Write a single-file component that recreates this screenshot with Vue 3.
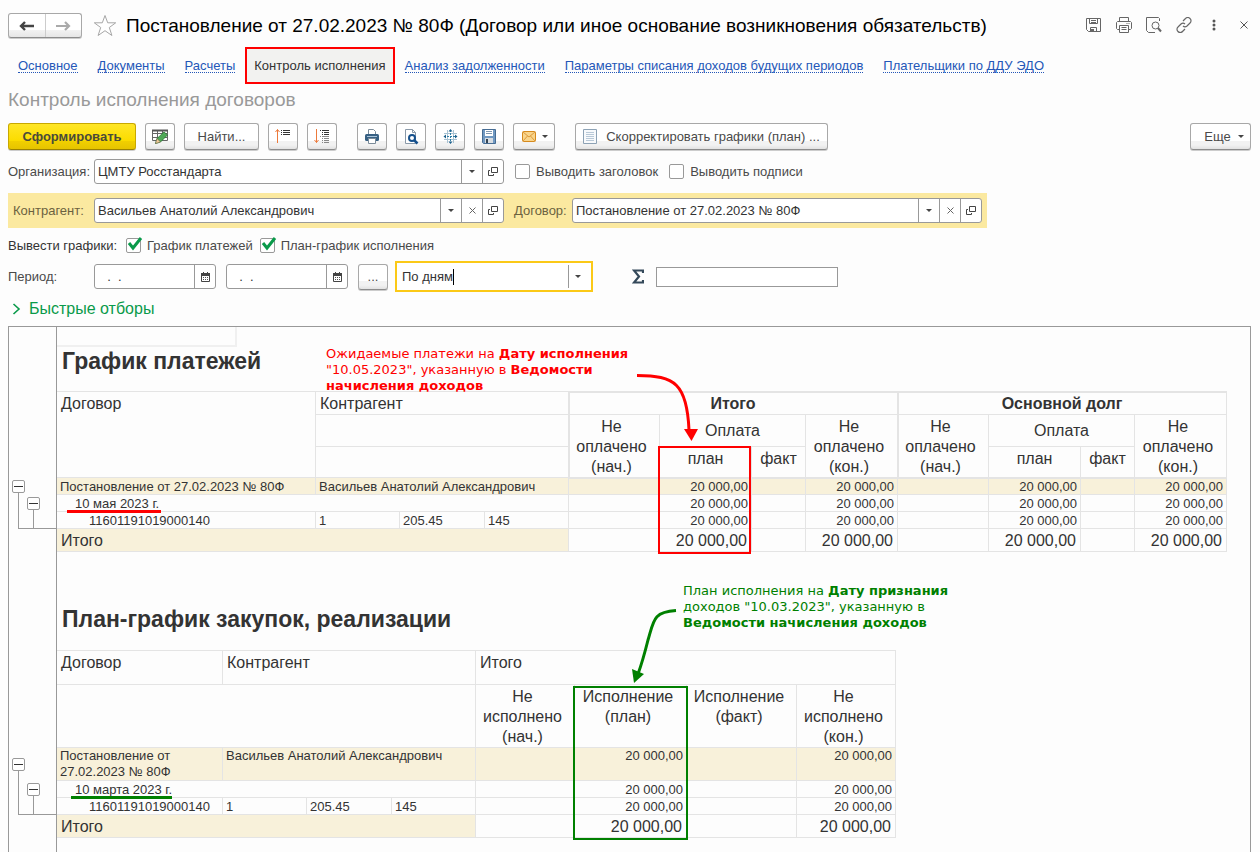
<script setup>
import { ref } from 'vue'

const links = [
  { text: 'Основное' },
  { text: 'Документы' },
  { text: 'Расчеты' },
  { text: 'Контроль исполнения', active: true },
  { text: 'Анализ задолженности' },
  { text: 'Параметры списания доходов будущих периодов' },
  { text: 'Плательщики по ДДУ ЭДО' },
]

const organization = ref('ЦМТУ Росстандарта')
const contractor = ref('Васильев Анатолий Александрович')
const contract = ref('Постановление от 27.02.2023 № 80Ф')
const periodicity = ref('По дням')
const dateFrom = ref('  .  .')
const dateTo = ref('  .  .')
const total = ref('')
const showTitle = ref(false)
const showSigns = ref(false)
const showPayments = ref(true)
const showPlan = ref(true)

const sum = '20 000,00'
const payments = ['', sum, '', sum, '', sum, '', sum]
const execution = ['', sum, '', sum]
</script>

<template>
  <main class="window">
    <header class="titlebar">
      <div class="history">
        <button type="button" aria-label="Назад">
          <svg width="16" height="10" viewBox="0 0 16 10"><path d="M6 1 2 5l4 4M2 5h13" fill="none" stroke="#444" stroke-width="2.400" /></svg>
        </button>
        <button type="button" aria-label="Вперед">
          <svg width="16" height="10" viewBox="0 0 16 10"><path d="m10 1 4 4-4 4M14 5H1" fill="none" stroke="#aaa" stroke-width="2.200" /></svg>
        </button>
      </div>
      <button class="plain star" type="button" aria-label="В избранное">
        <svg width="24" height="23" viewBox="0 0 24 23"><path d="m12 1.500 2.700 7.300h8L16.300 13.500l2.600 8L12 16.700l-6.900 4.800 2.600-8L1.300 8.800h8z" fill="#fff" stroke="#a6a6a6" /></svg>
      </button>
      <h1>Постановление от 27.02.2023 № 80Ф (Договор или иное основание возникновения обязательств)</h1>
      <div class="tools">
        <button class="plain" type="button" aria-label="Сохранить">
          <svg width="16" height="16" viewBox="0 0 16 16" fill="none" stroke="#666"><path d="M.5 1.500h14v13h-12l-2-2zM3.500 1.500v5h8v-5M5 3.500h5M5 5.500h5M4.500 14v-3.500h6V14" /><path d="M5 12h3v2H5z" fill="#666" stroke="none" /></svg>
        </button>
        <button class="plain" type="button" aria-label="Печать">
          <svg width="16" height="16" viewBox="0 0 16 16" fill="none" stroke="#666"><path d="M3.500 4.500v-4h9v4M3.500 12.500h-2l-1-1v-6l1-1h13l1 1v6l-1 1h-2M3.500 8.500h9v7h-9zM5.500 10.500h5M5.500 12.500h5M10.500 6.500h1M12.500 6.500h1" /></svg>
        </button>
        <button class="plain" type="button" aria-label="Просмотр">
          <svg width="16" height="16" viewBox="0 0 16 16" fill="none" stroke="#666"><path d="M9 15.500H2.500l-2-2V.5h12l1 1V4" /><circle cx="9.500" cy="8.500" r="3.500" /><path d="m12 11 3 3.500" stroke-width="2" /></svg>
        </button>
        <button class="plain" type="button" aria-label="Получить ссылку">
          <svg width="16" height="16" viewBox="0 0 16 16" fill="none" stroke="#666" stroke-width="1.200"><path d="m7 4 2.500-2.500a3 3 0 0 1 4.500 0 3 3 0 0 1 0 4.500L11 9a3 3 0 0 1-4 0M9 12l-2.500 2.500a3 3 0 0 1-4.500 0 3 3 0 0 1 0-4.500L5 7a3 3 0 0 1 4 0" /></svg>
        </button>
        <button class="plain" type="button" aria-label="Меню">
          <svg width="4" height="12" viewBox="0 0 4 12" fill="#555"><circle cx="2" cy="2" r="1.500" /><circle cx="2" cy="6" r="1.500" /><circle cx="2" cy="10" r="1.500" /></svg>
        </button>
        <button class="plain" type="button" aria-label="Закрыть">
          <svg width="8" height="8" viewBox="0 0 8 8"><path d="m.5.5 7 7M7.500.5l-7 7" stroke="#555" /></svg>
        </button>
      </div>
    </header>

    <nav class="links" aria-label="Разделы">
      <a v-for="l in links" :key="l.text" href="#" :class="{ active: l.active }"><span>{{ l.text }}</span></a>
    </nav>

    <div class="form">
      <h2>Контроль исполнения договоров</h2>

      <div class="toolbar">
        <button class="btn primary" type="button">Сформировать</button>
        <button class="btn icon" type="button" aria-label="Изменить вариант">
          <svg width="16" height="17" viewBox="0 0 16 17"><path d="M.5 2.500h15v10H.5zM.5 5.500h15M.5 9.500h15M5.500 2.500v10M10.500 2.500v10" fill="#fff" stroke="#666" /><path d="M0 2.500h16" stroke="#555" stroke-width="2" /><path d="m3.500 15.500 1.500-5 7-6.500 3.500 3-7 7z" fill="#4fa857" stroke="#2a7a34" stroke-width=".8" /><path d="m3.500 15.500 1.500-5 3.500 3.500z" fill="#f0c99a" stroke="#6b5a40" stroke-width=".5" /></svg>
        </button>
        <button class="btn find" type="button">Найти...</button>
        <button class="btn icon" type="button" aria-label="Свернуть группы">
          <svg width="16" height="17" viewBox="0 0 16 17"><path d="M2.500 15V1.500M.5 4l2-2.500 2 2.500" fill="none" stroke="#ec7a3c" /><path d="M6 2.500h1M8 2.500h7M6 4.500h1M8 4.500h7M6 6.500h1M8 6.500h7" stroke="#333" /></svg>
        </button>
        <button class="btn icon" type="button" aria-label="Развернуть группы">
          <svg width="16" height="17" viewBox="0 0 16 17"><path d="M2.500 1v13.500M.5 12l2 2.500 2-2.500" fill="none" stroke="#ec7a3c" /><path d="M6 2.500h1M8 2.500h7M8 4.500h1M10 4.500h5M8 6.500h1M10 6.500h5" stroke="#333" /><path d="M6 8.500h1M8 8.500h7M8 10.500h1M10 10.500h5M8 12.500h1M10 12.500h5M8 14.500h1M10 14.500h5" stroke="#888" /></svg>
        </button>
        <span class="gap"></span>
        <button class="btn icon" type="button" aria-label="Печать">
          <svg width="16" height="17" viewBox="0 0 16 17"><path d="M4.500 6.500v-5h5l2 2v3" fill="#fff" stroke="#7a8b99" /><rect x="1" y="6" width="14" height="7" rx="1.500" fill="#376083" /><path d="M3 8.500h10" stroke="#a9c4da" /><path d="M4.500 10.500h7v5h-7z" fill="#fff" stroke="#7a8b99" /></svg>
        </button>
        <button class="btn icon" type="button" aria-label="Предварительный просмотр">
          <svg width="16" height="17" viewBox="0 0 16 17"><path d="M2.500 1.500h7l3 3v11h-10z" fill="#fff" stroke="#8a99a8" /><path d="M9.500 1.500v3h3" fill="none" stroke="#8a99a8" /><circle cx="9" cy="10" r="3" fill="#fff" stroke="#15508c" stroke-width="2" /><path d="m11 12 3.500 3.500" stroke="#15508c" stroke-width="2.500" /></svg>
        </button>
        <button class="btn icon" type="button" aria-label="Параметры страницы">
          <svg width="15" height="17" viewBox="0 0 15 17"><path d="M4.500 2v13M10.500 2v13M1 5.500h13M1 11.500h13" stroke="#a9c3d3" /><path d="M7.500 2v13M1 8.500h13" stroke="#2c7da5" stroke-dasharray="2 1" /><path d="M5.500 3.500l2-2.500 2 2.500zM5.500 13.500l2 2.500 2-2.500zM3 6.500l-2.500 2 2.500 2zM12 6.500l2.500 2-2.500 2z" fill="#1d618c" /></svg>
        </button>
        <button class="btn icon" type="button" aria-label="Сохранить отчет">
          <svg width="16" height="17" viewBox="0 0 16 17"><path d="M1.500 1.500h13v14h-12l-1-1z" fill="#7199c2" stroke="#466c93" /><path d="M4 2h8v6H4z" fill="#fff" /><path d="M5 3.500h6M5 5.500h6" stroke="#7f98b2" /><path d="M4 10h8v5H4z" fill="#d8dde2" /><path d="M5 11h2v4H5z" fill="#345" /></svg>
        </button>
        <button class="btn mail" type="button" aria-label="Отправить">
          <svg width="14" height="11" viewBox="0 0 14 11"><rect x=".5" y=".5" width="13" height="10" rx="1" fill="#f9d58c" stroke="#d68a1e" /><path d="m1 1 6 5 6-5M1 10l4.500-5M13 10 8.500 5" fill="none" stroke="#dd9a3a" /></svg>
          <i class="arrow"></i>
        </button>
        <span class="gap"></span>
        <button class="btn adjust" type="button">
          <svg width="14" height="15" viewBox="0 0 14 15"><path d="M.5.5h13v14H.5z" fill="#f8fafc" stroke="#8da2b5" /><path d="M3 3.500h8M3 5.500h8M3 7.500h8M3 9.500h8M3 11.500h8" stroke="#b9c9d8" /></svg>
          <span>Скорректировать графики (план) ...</span>
        </button>
        <button class="btn more" type="button">Еще<i class="arrow"></i></button>
      </div>

      <div class="row org">
        <label class="caption" for="org">Организация:</label>
        <div class="field">
          <input id="org" v-model="organization" type="text" />
          <button type="button" aria-label="Выбрать"><i class="arrow"></i></button>
          <button type="button" aria-label="Открыть">
            <svg width="10" height="9" viewBox="0 0 10 9" fill="none" stroke="#444"><path d="M3.500.5h6v5h-6z" /><path d="M2 3.500H.5v5h5V7" /></svg>
          </button>
        </div>
        <label class="check first"><span class="box"><input v-model="showTitle" type="checkbox" /></span>Выводить заголовок</label>
        <label class="check"><span class="box"><input v-model="showSigns" type="checkbox" /></span>Выводить подписи</label>
      </div>

      <div class="row band">
        <label class="caption" for="contractor">Контрагент:</label>
        <div class="field">
          <input id="contractor" v-model="contractor" type="text" />
          <button type="button" aria-label="Выбрать"><i class="arrow"></i></button>
          <button type="button" aria-label="Очистить">
            <svg width="7" height="7" viewBox="0 0 7 7"><path d="m.5.5 6 6M6.500.5l-6 6" stroke="#666" /></svg>
          </button>
          <button type="button" aria-label="Открыть">
            <svg width="10" height="9" viewBox="0 0 10 9" fill="none" stroke="#444"><path d="M3.500.5h6v5h-6z" /><path d="M2 3.500H.5v5h5V7" /></svg>
          </button>
        </div>
        <label class="caption second" for="contract">Договор:</label>
        <div class="field">
          <input id="contract" v-model="contract" type="text" />
          <button type="button" aria-label="Выбрать"><i class="arrow"></i></button>
          <button type="button" aria-label="Очистить">
            <svg width="7" height="7" viewBox="0 0 7 7"><path d="m.5.5 6 6M6.500.5l-6 6" stroke="#666" /></svg>
          </button>
          <button type="button" aria-label="Открыть">
            <svg width="10" height="9" viewBox="0 0 10 9" fill="none" stroke="#444"><path d="M3.500.5h6v5h-6z" /><path d="M2 3.500H.5v5h5V7" /></svg>
          </button>
        </div>
      </div>

      <div class="row charts">
        <span class="caption wide">Вывести графики:</span>
        <label class="check">
          <span class="box"><input v-model="showPayments" type="checkbox" /><svg v-if="showPayments" width="16" height="14" viewBox="0 0 16 14"><path d="m2 6 4 5 8-10" fill="none" stroke="#0a9a4a" stroke-width="3" /></svg></span>График платежей
        </label>
        <label class="check">
          <span class="box"><input v-model="showPlan" type="checkbox" /><svg v-if="showPlan" width="16" height="14" viewBox="0 0 16 14"><path d="m2 6 4 5 8-10" fill="none" stroke="#0a9a4a" stroke-width="3" /></svg></span>План-график исполнения
        </label>
      </div>

      <div class="row period">
        <label class="caption" for="from">Период:</label>
        <div class="field date">
          <input id="from" v-model="dateFrom" type="text" />
          <button type="button" aria-label="Календарь">
            <svg width="9" height="10" viewBox="0 0 9 10"><path d="M.5 1.500h8v8h-8z" fill="#fff" stroke="#444" /><path d="M0 1h9v3H0z" fill="#444" /><path d="M2.500 0v2M6.500 0v2" stroke="#444" /><path d="M2 5.500h5M2 7.500h5" stroke="#555" stroke-dasharray="1 1" /></svg>
          </button>
        </div>
        <div class="field date">
          <input v-model="dateTo" type="text" aria-label="Конец периода" />
          <button type="button" aria-label="Календарь">
            <svg width="9" height="10" viewBox="0 0 9 10"><path d="M.5 1.500h8v8h-8z" fill="#fff" stroke="#444" /><path d="M0 1h9v3H0z" fill="#444" /><path d="M2.500 0v2M6.500 0v2" stroke="#444" /><path d="M2 5.500h5M2 7.500h5" stroke="#555" stroke-dasharray="1 1" /></svg>
          </button>
        </div>
        <button class="btn dots" type="button" aria-label="Выбрать период">...</button>
        <div class="focused">
          <input v-model="periodicity" type="text" aria-label="Периодичность" />
          <span class="caret"></span>
          <button type="button" aria-label="Выбрать"><i class="arrow"></i></button>
        </div>
        <label class="sigma" for="sum" aria-label="Сумма">
          <svg width="12" height="15" viewBox="0 0 12 15"><path d="M11 4V1.500H2l5 6-5 6h9V11" fill="none" stroke="#34495a" stroke-width="2.200" /></svg>
        </label>
        <input id="sum" v-model="total" class="total" type="text" />
      </div>

      <button class="quick" type="button">
        <svg width="9" height="12" viewBox="0 0 9 12"><path d="m1.500 1 5.500 5-5.500 5" fill="none" stroke="#0a9a4a" stroke-width="1.600" /></svg>
        Быстрые отборы
      </button>

      <div class="report">
        <section class="part">
          <div class="gutter">
            <div class="tree">
              <i class="trunk"></i><i class="twig"></i>
              <button class="t1" type="button" aria-label="Свернуть договор"></button>
              <button class="t2" type="button" aria-label="Свернуть дату"></button>
            </div>
          </div>
          <div class="sheet">
            <div class="cursor"></div>
            <h3>График платежей</h3>
            <table class="payments">
              <colgroup>
                <col class="w259" /><col class="w84" /><col class="w85" /><col class="w84" />
                <col class="w91" /><col class="w92" /><col class="w54" /><col class="w92" />
                <col class="w91" /><col class="w92" /><col class="w54" /><col class="w92" />
              </colgroup>
              <thead>
                <tr class="h24">
                  <th class="left" rowspan="3">Договор</th>
                  <th class="left" colspan="3">Контрагент</th>
                  <th class="group" colspan="4">Итого</th>
                  <th class="group" colspan="4">Основной долг</th>
                </tr>
                <tr class="h32">
                  <th colspan="3"></th>
                  <template v-for="g in 2" :key="g">
                    <th class="wrap edge" rowspan="2">Не<br />оплачено<br />(нач.)</th>
                    <th class="pay" colspan="2">Оплата</th>
                    <th class="wrap" rowspan="2">Не<br />оплачено<br />(кон.)</th>
                  </template>
                </tr>
                <tr class="h31">
                  <th colspan="3"></th>
                  <template v-for="g in 2" :key="g">
                    <th>план</th>
                    <th>факт</th>
                  </template>
                </tr>
              </thead>
              <tbody>
                <tr class="h17 tint first-row">
                  <td>Постановление от 27.02.2023 № 80Ф</td>
                  <td colspan="3">Васильев Анатолий Александрович</td>
                  <td v-for="(v, i) in payments" :key="i" class="num">{{ v }}</td>
                </tr>
                <tr class="h17">
                  <td class="in1" colspan="4"><span class="mark red">10 мая 2023 г.</span></td>
                  <td v-for="(v, i) in payments" :key="i" class="num">{{ v }}</td>
                </tr>
                <tr class="h17">
                  <td class="in2">11601191019000140</td><td>1</td><td>205.45</td><td>145</td>
                  <td v-for="(v, i) in payments" :key="i" class="num">{{ v }}</td>
                </tr>
                <tr class="h23 sum">
                  <td class="tinted" colspan="4">Итого</td>
                  <td v-for="(v, i) in payments" :key="i" class="num">{{ v }}</td>
                </tr>
              </tbody>
            </table>
            <div class="frame red-frame"></div>
            <p class="note red-note">Ожидаемые платежи на <b>Дату исполнения</b><br />"10.05.2023", указанную в <b>Ведомости<br />начисления доходов</b></p>
            <svg class="red-arrow" width="64" height="70" viewBox="0 0 64 70"><path d="M0 3.500C38 3.500 50 12 52 58" fill="none" stroke="#f00" stroke-width="3" /><path d="M47 57h14L54.500 69z" fill="#f00" /></svg>
          </div>
        </section>

        <section class="part">
          <div class="gutter">
            <div class="tree tall">
              <i class="trunk"></i><i class="twig"></i>
              <button class="t1" type="button" aria-label="Свернуть договор"></button>
              <button class="t2" type="button" aria-label="Свернуть дату"></button>
            </div>
          </div>
          <div class="sheet">
            <h3 class="plan-title">План-график закупок, реализации</h3>
            <table class="plan">
              <colgroup>
                <col class="w166" /><col class="w84" /><col class="w85" /><col class="w84" />
                <col class="w99" /><col class="w112" /><col class="w110" /><col class="w99" />
              </colgroup>
              <thead>
                <tr class="h35">
                  <th class="left">Договор</th>
                  <th class="left" colspan="3">Контрагент</th>
                  <th class="left" colspan="4">Итого</th>
                </tr>
                <tr class="h63">
                  <th colspan="4"></th>
                  <th class="wrap">Не<br />исполнено<br />(нач.)</th>
                  <th class="wrap">Исполнение<br />(план)</th>
                  <th class="wrap">Исполнение<br />(факт)</th>
                  <th class="wrap">Не<br />исполнено<br />(кон.)</th>
                </tr>
              </thead>
              <tbody>
                <tr class="h33 tint">
                  <td>Постановление от<br />27.02.2023 № 80Ф</td>
                  <td colspan="3">Васильев Анатолий Александрович</td>
                  <td v-for="(v, i) in execution" :key="i" class="num">{{ v }}</td>
                </tr>
                <tr class="h17">
                  <td class="in1" colspan="4"><span class="mark green">10 марта 2023 г.</span></td>
                  <td v-for="(v, i) in execution" :key="i" class="num">{{ v }}</td>
                </tr>
                <tr class="h17">
                  <td class="in2">11601191019000140</td><td>1</td><td>205.45</td><td>145</td>
                  <td v-for="(v, i) in execution" :key="i" class="num">{{ v }}</td>
                </tr>
                <tr class="h23 sum">
                  <td class="tinted" colspan="4">Итого</td>
                  <td v-for="(v, i) in execution" :key="i" class="num">{{ v }}</td>
                </tr>
              </tbody>
            </table>
            <div class="frame green-frame"></div>
            <p class="note green-note">План исполнения на <b>Дату признания</b><br />доходов "10.03.2023", указанную в<br /><b>Ведомости начисления доходов</b></p>
            <svg class="green-arrow" width="46" height="76" viewBox="0 0 46 76"><path d="M45 2.500C22 4 23 12 17 32C13 48 11 55 7 66" fill="none" stroke="#008000" stroke-width="3" /><path d="M1 61 13 66 3 75z" fill="#008000" /></svg>
          </div>
        </section>
        <div class="part rest"><div class="gutter"></div></div>
      </div>
    </div>
  </main>
</template>

<style>
html, body { background: #fdfdfd; }
</style>

<style scoped>
* { box-sizing: border-box; }
.window {
  display: flex;
  flex-direction: column;
  min-height: 100vh;
  font: 13px/16px "Liberation Sans", Arial, sans-serif;
  color: #4a4a4a;
}
button, input { font: inherit; color: inherit; margin: 0; padding: 0; }
button { display: flex; align-items: center; justify-content: center; cursor: pointer; }
svg { display: block; flex: none; }
h1, h2, h3, p { margin: 0; }

.titlebar { display: flex; align-items: center; height: 47px; padding: 4px 1px 0 8px; }
.history {
  display: flex;
  width: 74px;
  height: 25px;
  border: 1px solid #a8a8a8;
  border-bottom-color: #8c8c8c;
  border-radius: 3px;
  background: linear-gradient(#fff 70%, #f2f2f2 70%, #e6e6e6);
  box-shadow: 0 1px 0 #ccc;
}
.history button { flex: 1; border: 0; background: none; }
.history button + button { border-left: 1px solid #ccc; }
.plain { border: 0; background: none; width: 30px; height: 30px; }
.star { width: 24px; margin: 0 9px 0 11px; }
h1 { flex: 1; font-size: 19px; line-height: 24px; font-weight: 400; color: #000; white-space: nowrap; }
.tools { display: flex; margin-bottom: 2px; }

.links { display: flex; height: 37px; padding-left: 8px; }
.links a { display: flex; align-items: center; padding: 1px 10px 0; color: #2457b8; text-decoration: none; white-space: nowrap; }
.links a span { line-height: 13px; border-bottom: 1px dotted #2457b8; }
.links a.active { padding: 1px 7px 0; border: 2px solid #f00; background: #f2f2f0; color: #333; }
.links a.active span { border-bottom-color: transparent; }

.form { flex: 1; display: flex; flex-direction: column; padding: 0 9px 0 8px; }
h2 { font-size: 19px; line-height: 32px; font-weight: 400; color: #999; }

.toolbar { display: flex; gap: 9px; padding-top: 7px; }
.btn {
  height: 27px;
  border: 1px solid #a8a8a8;
  border-bottom-color: #8c8c8c;
  border-radius: 3px;
  background: linear-gradient(#fff 66%, #f2f2f2 66%, #f2f2f2 84%, #e2e2e2);
  box-shadow: 0 1px 0 #ccc;
  white-space: nowrap;
}
.primary { width: 128px; border-color: #c8a800; border-bottom-color: #9c8200; background: linear-gradient(#ffe626, #fbdc00 66%, #f2d000 66%, #e6c400); font-weight: 700; color: #4a4a3a; }
.icon { width: 30px; }
.find { width: 75px; }
.gap { width: 2px; }
.mail { width: 42px; gap: 6px; padding-left: 2px; }
.adjust { width: 253px; gap: 9px; }
.more { width: 61px; gap: 7px; margin-left: auto; padding-left: 7px; }
.arrow { border: 3px solid transparent; border-top-color: #444; border-bottom: 0; }

.row { display: flex; align-items: center; }
.org { margin-top: 9px; height: 25px; }
.caption { width: 86px; white-space: nowrap; }
.field { display: flex; width: 410px; height: 25px; border: 1px solid #999; border-radius: 3px; background: #fff; }
.field input { flex: 1; min-width: 0; border: 0; outline: 0; background: none; padding: 0 3px; color: #333; }
.field button { width: 21px; border: 0; border-left: 1px solid #999; background: none; }
.check { display: flex; align-items: center; white-space: nowrap; margin-right: 11px; }
.check.first { margin-left: 11px; }
.box { position: relative; width: 15px; height: 15px; margin-right: 6px; }
.box input { appearance: none; display: block; width: 15px; height: 15px; border: 1px solid #999; border-radius: 2px; background: #fff; }
.box svg { position: absolute; left: 1px; top: -1px; }

.band { align-self: flex-start; margin-top: 9px; padding: 5px; background: #fbe9a0; }
.band .caption { width: 81px; color: #6b623f; }
.band .caption.second { width: 58px; margin-left: 10px; }

.charts { height: 33px; padding-top: 2px; }
.caption.wide { width: 118px; color: #333; }
.charts .check { margin-right: 7px; }

.period { height: 31px; }
.date { width: 122px; margin-right: 10px; }
.date input { padding-left: 5px; white-space: pre; }
.dots { width: 30px; height: 26px; margin-right: 7px; }
.focused { display: flex; align-items: center; width: 198px; height: 31px; border: 2px solid #fbc917; background: #fff; padding-left: 5px; }
.focused input { field-sizing: content; border: 0; outline: 0; background: none; color: #333; }
.caret { width: 1px; height: 16px; background: #000; }
.focused button { width: 23px; height: 23px; margin-left: auto; padding-right: 4px; border: 0; border-left: 1px solid #999; background: none; }
.sigma { margin: 0 12px 0 39px; }
.total { width: 182px; height: 20px; border: 1px solid #999; background: #fff; }

.quick { justify-content: flex-start; align-self: flex-start; gap: 8px; height: 34px; padding-left: 4px; border: 0; background: none; color: #0a9a4a; font-size: 16px; }

.report { flex: 1; display: flex; flex-direction: column; border: 1px solid #999; border-bottom: 0; color: #333; overflow: hidden; }
.part { display: grid; grid-template-columns: 48px 1fr; }
.rest { flex: 1; }
.gutter { display: flex; align-items: flex-end; padding: 0 0 23px 3px; border-right: 1px solid #999; }
.rest .gutter { padding: 0; }
.tree { flex: 1; display: grid; grid-template: 17px 17px 17px / 15px 15px 1fr; align-items: center; }
.tree.tall { grid-template-rows: 33px 17px 17px; }
.tree button { width: 13px; height: 13px; border: 1px solid #999; border-radius: 2px; background: linear-gradient(#333, #333) center / 9px 1px no-repeat #fff; }
.t1 { grid-area: 1 / 1; }
.t2 { grid-area: 2 / 2; }
.trunk { grid-area: 1 / 1 / 4 / 4; align-self: stretch; margin: 8px 0 0 6px; border: solid #999; border-width: 0 0 1px 1px; }
.tall .trunk { margin-top: 16px; }
.twig { grid-area: 2 / 2 / 4 / 3; align-self: stretch; margin: 8px 0 0 6px; border-left: 1px solid #999; }

.sheet { position: relative; }
.cursor { width: 180px; height: 20px; border: solid #f0f0f0; border-width: 0 2px 2px 0; }
h3 { height: 44px; padding-left: 5px; font-size: 23px; line-height: 28px; font-weight: 700; white-space: nowrap; }
h3.plan-title { height: 98px; padding-top: 53px; }
table { table-layout: fixed; border-collapse: separate; border-spacing: 0; line-height: 16px; }
.payments { width: 1170px; }
.plan { width: 839px; }
th, td { padding: 0 3px; border: solid #e4e4e4; border-width: 0 1px 1px 0; vertical-align: top; text-align: left; white-space: nowrap; overflow: hidden; }
th { padding: 2px 4px 0; font-size: 16px; line-height: 20px; font-weight: 400; text-align: center; }
thead tr:first-child th { border-top-width: 1px; }
th.left { text-align: left; }
th.group { font-weight: 700; box-shadow: inset 1px 1px #e4e4e4; }
th.edge { box-shadow: inset 1px 0 #e4e4e4; }
th.wrap { padding: 2px 7px 0 2px; }
th.pay { padding-top: 6px; }
.num { text-align: right; }
.h17 td { padding-top: 1px; line-height: 15px; }
.tint td, td.tinted { background: #f8f1da; }
.first-row .num { box-shadow: inset 0 1px #e4e4e4; }
.sum td { padding: 1px 4px 0; font-size: 16px; line-height: 21px; }
td.in1 { padding-left: 18px; overflow: visible; }
td.in2 { padding-left: 32px; }
.mark { position: relative; }
.mark::after { content: ""; position: absolute; left: -8px; right: -2px; bottom: -2px; height: 3px; background: #f00; }
.mark.green::after { left: -4px; right: 0; background: #008000; }
.w54 { width: 54px; } .w84 { width: 84px; } .w85 { width: 85px; } .w91 { width: 91px; } .w92 { width: 92px; }
.w99 { width: 99px; } .w110 { width: 110px; } .w112 { width: 112px; } .w166 { width: 166px; } .w259 { width: 259px; }
.h17 { height: 17px; } .h23 { height: 23px; } .h24 { height: 24px; } .h31 { height: 31px; } .h32 { height: 32px; }
.h33 { height: 33px; } .h35 { height: 35px; } .h63 { height: 63px; }

.note { position: absolute; font: 13px/16px "DejaVu Sans", Verdana, sans-serif; white-space: nowrap; }
.red-note { left: 269px; top: 19px; color: #f00; }
.green-note { left: 626px; top: 31px; color: #008000; }
.frame { position: absolute; pointer-events: none; border: 2px solid #f00; }
.red-frame { left: 601px; top: 119px; width: 93px; height: 108px; }
.green-frame { left: 516px; top: 134px; width: 115px; height: 154px; border-color: #008000; }
.red-arrow { position: absolute; left: 580px; top: 45px; }
.green-arrow { position: absolute; left: 574px; top: 56px; }
</style>
